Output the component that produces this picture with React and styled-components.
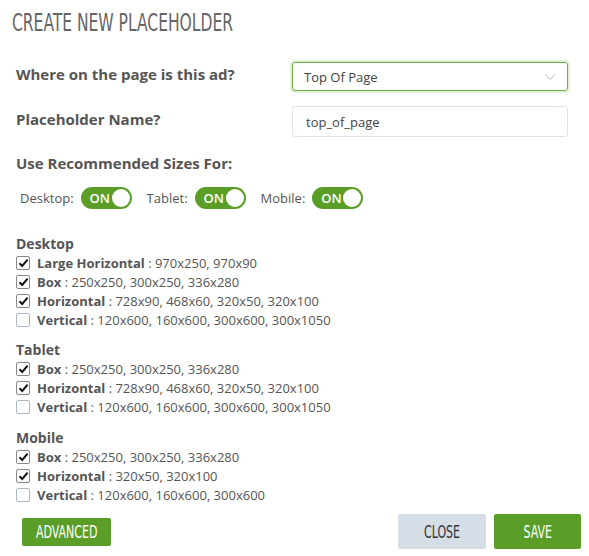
import styled, { createGlobalStyle } from "styled-components";

const GlobalStyle = createGlobalStyle`
  body {
    margin: 0;
    background: #fff;
    font-family: "Open Sans", "Liberation Sans", sans-serif;
    color: #555;
  }
`;

const Container = styled.div`
  width: 589px;
  height: 556px;
  box-sizing: border-box;
  padding: 8px 8px 0 16px;
  display: flex;
  flex-direction: column;
`;

const Title = styled.h1`
  margin: 0 0 0 -4px;
  font-family: "Liberation Sans Narrow", "DejaVu Sans Condensed", sans-serif;
  font-weight: 400;
  font-size: 25px;
  color: #666;
  line-height: 30px;
  transform: scaleX(0.69);
  transform-origin: left center;
  white-space: nowrap;
`;

const FormRow = styled.div`
  display: flex;
  align-items: center;
  justify-content: space-between;
  margin-top: ${(p) => p.top || 0}px;
  padding-right: 13px;
`;

const Label = styled.label`
  font-size: 15px;
  font-weight: 700;
  color: #555;
  margin-bottom: 6px;
`;

const Field = styled.div`
  width: 276px;
  height: ${(p) => (p.select ? 29 : 31)}px;
  box-sizing: border-box;
  border: 1px solid ${(p) => (p.select ? "#6fae3c" : "#dde3ea")};
  box-shadow: ${(p) => (p.select ? "0 0 0 2px #e3efd8" : "none")};
  border-radius: 3px;
  display: flex;
  align-items: center;
  justify-content: space-between;
  padding: 0 11px 0 ${(p) => (p.select ? 11 : 13)}px;
  font-size: 13px;
  color: #444;
`;

const ToggleRow = styled.div`
  display: flex;
  align-items: center;
  margin-top: 8px;
  padding-left: 4px;
`;

const ToggleLabel = styled.span`
  font-size: 13px;
  color: #555;
  margin-right: 7px;
`;

const Toggle = styled.div`
  width: 51px;
  height: 22px;
  border-radius: 11px;
  background: #5a9e27;
  display: flex;
  align-items: center;
  justify-content: space-between;
  padding: 0 2px 0 9px;
  box-sizing: border-box;
  margin-right: 15px;
  color: #fff;
  font-size: 13px;
  font-weight: 600;
`;

const Knob = styled.span`
  width: 18px;
  height: 18px;
  border-radius: 50%;
  background: #fff;
`;

const Group = styled.div`
  margin-top: ${(p) => p.top}px;
`;

const GroupTitle = styled.div`
  font-size: 14px;
  font-weight: 700;
  color: #555;
  line-height: 18px;
`;

const SizeRow = styled.div`
  display: flex;
  align-items: center;
  height: 19px;
  font-size: 13px;
  color: #555;
`;

const Box = styled.span`
  width: 12px;
  height: 12px;
  border: 1px solid ${(p) => (p.checked ? "#888" : "#a9b7c9")};
  border-radius: 2px;
  margin-right: 7px;
  display: flex;
  align-items: center;
  justify-content: center;
  background: #fff;
`;

const Footer = styled.div`
  margin-top: auto;
  padding: 0 0 7px 6px;
  display: flex;
  align-items: center;
`;

const Button = styled.button`
  font-family: "Liberation Sans Narrow", "DejaVu Sans Condensed", sans-serif;
  font-size: 17px;
  border: none;
  border-radius: 2px;
  cursor: pointer;
  padding: 0;
  height: ${(p) => (p.small ? 28 : 35)}px;
  width: ${(p) => p.w}px;
  background: ${(p) => (p.kind === "light" ? "#d5dde7" : "#5a9e27")};
  color: ${(p) => (p.kind === "light" ? "#333" : "#fff")};
  margin-left: ${(p) => p.ml || 0}px;
  display: flex;
  align-items: center;
  justify-content: center;
`;

const Narrow = styled.span`
  display: inline-block;
  transform: scaleX(0.72);
  white-space: nowrap;
`;

const Check = () => (
  <svg width="11" height="10" viewBox="0 0 11 10">
    <path d="M1.5 5.2 L4.2 8 L9.6 1.6" fill="none" stroke="#111" strokeWidth="2" />
  </svg>
);

const groups = [
  {
    name: "Desktop",
    top: 26,
    items: [
      ["Large Horizontal", "970x250, 970x90", true],
      ["Box", "250x250, 300x250, 336x280", true],
      ["Horizontal", "728x90, 468x60, 320x50, 320x100", true],
      ["Vertical", "120x600, 160x600, 300x600, 300x1050", false],
    ],
  },
  {
    name: "Tablet",
    top: 12,
    items: [
      ["Box", "250x250, 300x250, 336x280", true],
      ["Horizontal", "728x90, 468x60, 320x50, 320x100", true],
      ["Vertical", "120x600, 160x600, 300x600, 300x1050", false],
    ],
  },
  {
    name: "Mobile",
    top: 13,
    items: [
      ["Box", "250x250, 300x250, 336x280", true],
      ["Horizontal", "320x50, 320x100", true],
      ["Vertical", "120x600, 160x600, 300x600", false],
    ],
  },
];

const App = () => {
  return (
    <>
      <GlobalStyle />
      <Container>
        <Title>CREATE NEW PLACEHOLDER</Title>
        <FormRow top={24}>
          <Label>Where on the page is this ad?</Label>
          <Field select>
            Top Of Page
            <svg width="12" height="8" viewBox="0 0 12 8">
              <path d="M1 1 L6 6.5 L11 1" fill="none" stroke="#bbb" strokeWidth="1" />
            </svg>
          </Field>
        </FormRow>
        <FormRow top={15}>
          <Label>Placeholder Name?</Label>
          <Field>top_of_page</Field>
        </FormRow>
        <FormRow top={16}>
          <Label>Use Recommended Sizes For:</Label>
        </FormRow>
        <ToggleRow>
          <ToggleLabel>Desktop:</ToggleLabel>
          <Toggle>ON<Knob /></Toggle>
          <ToggleLabel>Tablet:</ToggleLabel>
          <Toggle>ON<Knob /></Toggle>
          <ToggleLabel>Mobile:</ToggleLabel>
          <Toggle>ON<Knob /></Toggle>
        </ToggleRow>
        {groups.map((g) => (
          <Group key={g.name} top={g.top}>
            <GroupTitle>{g.name}</GroupTitle>
            {g.items.map(([n, s, c]) => (
              <SizeRow key={n}>
                <Box checked={c}>{c && <Check />}</Box>
                <b>{n}</b>&nbsp;: {s}
              </SizeRow>
            ))}
          </Group>
        ))}
        <Footer>
          <Button small w={89}><Narrow>ADVANCED</Narrow></Button>
          <Button kind="light" w={88} ml={287}><Narrow>CLOSE</Narrow></Button>
          <Button w={87} ml={8}><Narrow>SAVE</Narrow></Button>
        </Footer>
      </Container>
    </>
  );
};

export default App;
